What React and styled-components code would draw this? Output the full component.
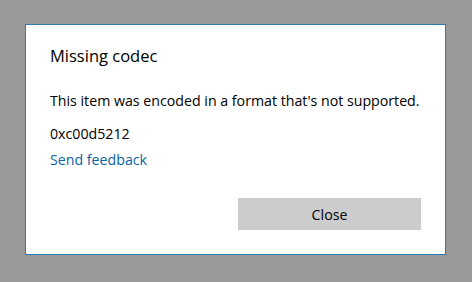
import React from "react";
import styled, { createGlobalStyle } from "styled-components";

const GlobalStyle = createGlobalStyle`
  html, body {
    margin: 0;
    padding: 0;
    background: #999999;
  }
  body {
    font-family: "Open Sans", "Noto Sans", sans-serif;
    color: #000;
  }
`;

const Page = styled.div`
  width: 472px;
  height: 282px;
  padding: 24px 0 0 25px;
  box-sizing: border-box;
`;

const Dialog = styled.div`
  width: 421px;
  height: 231px;
  box-sizing: border-box;
  background: #ffffff;
  border: 1px solid #2b7ab8;
  padding: 19px 24px 0 24px;
  display: flex;
  flex-direction: column;
`;

const Title = styled.h1`
  margin: 0;
  font-size: 16.5px;
  font-weight: 400;
  line-height: 24px;
`;

const Message = styled.p`
  margin: 23px 0 0;
  font-size: 14.2px;
  line-height: 20px;
`;

const Code = styled.div`
  margin-top: 13px;
  font-size: 14.2px;
  line-height: 20px;
`;

const Link = styled.a`
  margin-top: 6px;
  font-size: 14.2px;
  line-height: 20px;
  color: #0a62a6;
  text-decoration: none;
  cursor: pointer;
`;

const Footer = styled.div`
  margin-top: auto;
  padding-bottom: 24px;
  display: flex;
  justify-content: flex-end;
`;

const Button = styled.button`
  width: 183px;
  height: 32px;
  border: none;
  background: #cccccc;
  font-family: inherit;
  font-size: 14.2px;
  color: #000;
  padding: 0;
`;

const App = () => {
  return (
    <>
      <GlobalStyle />
      <Page>
        <Dialog>
          <Title>Missing codec</Title>
          <Message>This item was encoded in a format that's not supported.</Message>
          <Code>0xc00d5212</Code>
          <Link>Send feedback</Link>
          <Footer>
            <Button>Close</Button>
          </Footer>
        </Dialog>
      </Page>
    </>
  );
};

export default App;
